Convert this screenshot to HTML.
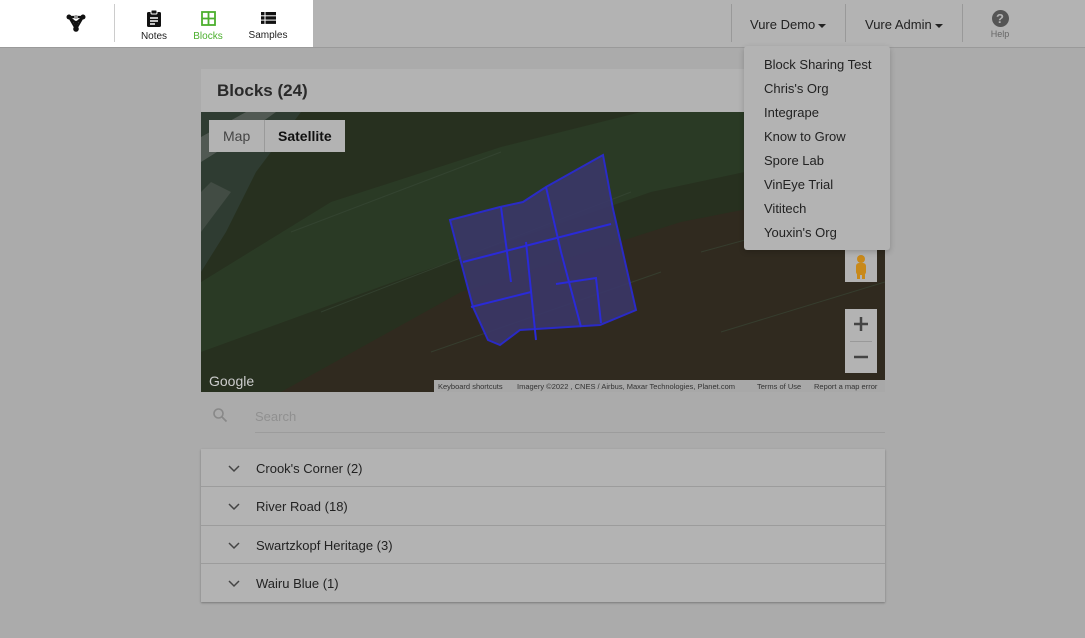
<!DOCTYPE html>
<html><head><style>
*{box-sizing:border-box;margin:0;padding:0}
body{width:1085px;height:638px;overflow:hidden;background:#ababab;font-family:"Liberation Sans",sans-serif;color:#222;position:relative}
.nav{position:absolute;left:0;top:0;width:1085px;height:48px;background:#b3b3b3;border-bottom:1px solid #9a9a9a}
.wl{position:absolute;left:0;top:0;width:313px;height:47px;background:#fff}
.sep{position:absolute;top:4px;width:1px;height:38px;background:#ccc}
.tab{position:absolute;top:0;text-align:center;font-size:10px;color:#222}
.dd{position:absolute;top:17px;font-size:13px;color:#222}
.caret{display:inline-block;border-left:4px solid transparent;border-right:4px solid transparent;border-top:4px solid #222;vertical-align:middle;margin-left:3px}
.panel{position:absolute;left:201px;top:69px;width:684px;height:43px;background:#b3b3b3;font-size:17px;padding:12px 16px;font-weight:bold;color:#2a2a2a}
.map{position:absolute;left:201px;top:112px;width:684px;height:280px;overflow:hidden;background:#252d21}
.list{position:absolute;left:201px;top:449px;width:684px;background:#b3b3b3;box-shadow:0 1px 2px rgba(0,0,0,.3)}
.row{height:38.3px;border-bottom:1px solid #9c9c9c;font-size:13px;padding-left:55px;line-height:39px;position:relative}
.row:last-child{border-bottom:none}
.row svg{position:absolute;left:27px;top:16px}
.menu{position:absolute;left:744px;top:46px;width:146px;height:204px;background:#b3b3b3;border-radius:3px;box-shadow:0 2px 6px rgba(0,0,0,.2)}
.menu div{height:24px;line-height:24px;font-size:13px;padding-left:20px}
</style></head><body>
<div class="nav">
 <div class="wl">
  <svg style="position:absolute;left:66px;top:13px" width="20" height="20" viewBox="0 0 20 20"><g fill="#111"><circle cx="3" cy="4" r="2.5"/><circle cx="17" cy="4" r="2.5"/><circle cx="10" cy="16" r="2.8"/><circle cx="10" cy="10" r="2.2"/></g><path d="M3 4L10 10L17 4M3 4L10 16L17 4M10 10V16M3 4H17" stroke="#111" stroke-width="2.2" fill="none"/><circle cx="10" cy="4" r="2" fill="#999"/></svg>
  <div class="sep" style="left:114px"></div>
  <div class="tab" style="left:138px;width:32px"><svg style="margin-top:10px" width="14" height="17" viewBox="0 0 14 17"><rect x="0" y="2" width="14" height="15" rx="1.5" fill="#111"/><rect x="4" y="0" width="6" height="4" rx="1" fill="#111" stroke="#fff" stroke-width="1"/><path d="M3 8h8M3 11h8M3 14h5" stroke="#fff" stroke-width="1.4"/></svg><div style="margin-top:1px">Notes</div></div>
  <div class="tab" style="left:190px;width:36px;color:#4caf2e"><svg style="margin-top:11px" width="15" height="15" viewBox="0 0 15 15"><rect x="1" y="1" width="13" height="13" fill="none" stroke="#4caf2e" stroke-width="1.8"/><path d="M7.5 1v13M1 7.5h13" stroke="#4caf2e" stroke-width="1.8"/></svg><div style="margin-top:2px">Blocks</div></div>
  <div class="tab" style="left:246px;width:44px"><svg style="margin-top:12px" width="15" height="12" viewBox="0 0 15 12"><g fill="#111"><rect x="0" y="0" width="3.5" height="3.3"/><rect x="4.5" y="0" width="10.5" height="3.3"/><rect x="0" y="4.3" width="3.5" height="3.3"/><rect x="4.5" y="4.3" width="10.5" height="3.3"/><rect x="0" y="8.6" width="3.5" height="3.3"/><rect x="4.5" y="8.6" width="10.5" height="3.3"/></g></svg><div style="margin-top:3px">Samples</div></div>
 </div>
 <div class="sep" style="left:731px;background:#999"></div>
 <div class="dd" style="left:750px">Vure Demo<span class="caret"></span></div>
 <div class="sep" style="left:845px;background:#999"></div>
 <div class="dd" style="left:865px">Vure Admin<span class="caret"></span></div>
 <div class="sep" style="left:962px;background:#999"></div>
 <div class="tab" style="left:984px;width:32px;color:#666"><div style="width:17px;height:17px;border-radius:50%;background:#555;color:#b3b3b3;font-weight:bold;font-size:13px;line-height:17px;margin:10px auto 0">?</div><div style="margin-top:2px;font-size:9px">Help</div></div>
</div>
<div class="panel">Blocks (24)</div>
<div class="map">
 <svg width="684" height="280" viewBox="0 0 684 280">
  <rect width="684" height="280" fill="#27301f"/>
  <path d="M0 170L130 90L300 35L440 0H684V30L450 80L220 160L0 240Z" fill="#2a3a25"/>
  <path d="M80 280L260 180L480 110L684 70V280Z" fill="#33291f" opacity=".8"/>
  <path d="M0 0H100L55 60L25 120L0 160Z" fill="#2f3c32"/>
  <path d="M0 50L40 25L75 0H45L0 25Z" fill="#5a605b" opacity=".8"/>
  <path d="M0 120L30 80L10 70L0 80Z" fill="#4a524c" opacity=".7"/>
  <g stroke="#3a4a38" stroke-width="1" opacity=".6"><path d="M90 120L300 40M120 200L430 80M500 140L684 90M230 240L460 160M520 220L684 170"/></g>
  <path d="M249 108L299 95L322 90L345 75L402 43L412 97L435 198L399 213L319 218L299 233L287 228L272 195L260 150Z" fill="#3a3768" stroke="#2a2ad8" stroke-width="2" opacity=".9"/>
  <path d="M262 150L410 112M270 195L330 180M345 75L360 140M300 95L310 170M325 130L335 228M360 140L380 215M355 172L395 166L400 211" stroke="#2a2ad8" stroke-width="2" fill="none"/>
  <rect x="8" y="8" width="136" height="32" fill="#b3b3b3"/>
  <rect x="63" y="8" width="1" height="32" fill="#9a9a9a"/>
  <text x="22" y="29" font-size="14" fill="#444" font-family="Liberation Sans">Map</text>
  <text x="77" y="29" font-size="14" font-weight="bold" fill="#111" font-family="Liberation Sans">Satellite</text>
  <rect x="644" y="138" width="32" height="32" fill="#b3b3b3"/>
  <circle cx="660" cy="147" r="4" fill="#c8891a"/><rect x="655" y="151" width="10" height="12" rx="3" fill="#c8891a"/><rect x="656" y="160" width="3" height="7" fill="#c8891a"/><rect x="661" y="160" width="3" height="7" fill="#c8891a"/>
  <rect x="644" y="197" width="32" height="64" fill="#b3b3b3"/>
  <rect x="649" y="229" width="22" height="1" fill="#999"/>
  <path d="M660 205v14M653 212h14" stroke="#444" stroke-width="2.5"/>
  <path d="M653 245h14" stroke="#444" stroke-width="2.5"/>
  <text x="8" y="274" font-size="14" fill="#ccc" font-family="Liberation Sans">Google</text>
  <rect x="233" y="268" width="451" height="12" fill="#a8a8a8"/>
  <text x="237" y="277" font-size="7.5" fill="#333" font-family="Liberation Sans">Keyboard shortcuts</text>
  <text x="316" y="277" font-size="7.5" fill="#333" font-family="Liberation Sans">Imagery ©2022 , CNES / Airbus, Maxar Technologies, Planet.com</text>
  <text x="556" y="277" font-size="7.5" fill="#333" font-family="Liberation Sans">Terms of Use</text>
  <text x="613" y="277" font-size="7.5" fill="#333" font-family="Liberation Sans">Report a map error</text>
 </svg>
</div>
<svg style="position:absolute;left:212px;top:407px" width="16" height="16" viewBox="0 0 16 16"><circle cx="6.5" cy="6.5" r="4.5" stroke="#888" stroke-width="1.6" fill="none"/><path d="M10 10l4.5 4.5" stroke="#888" stroke-width="1.8"/></svg>
<div style="position:absolute;left:255px;top:409px;font-size:13px;color:#909090">Search</div>
<div style="position:absolute;left:255px;top:432px;width:630px;height:1px;background:#9c9c9c"></div>
<div class="list">
 <div class="row"><svg width="12" height="8" viewBox="0 0 12 8"><path d="M1 1l5 5 5-5" stroke="#444" stroke-width="1.5" fill="none"/></svg>Crook's Corner (2)</div>
 <div class="row"><svg width="12" height="8" viewBox="0 0 12 8"><path d="M1 1l5 5 5-5" stroke="#444" stroke-width="1.5" fill="none"/></svg>River Road (18)</div>
 <div class="row"><svg width="12" height="8" viewBox="0 0 12 8"><path d="M1 1l5 5 5-5" stroke="#444" stroke-width="1.5" fill="none"/></svg>Swartzkopf Heritage (3)</div>
 <div class="row"><svg width="12" height="8" viewBox="0 0 12 8"><path d="M1 1l5 5 5-5" stroke="#444" stroke-width="1.5" fill="none"/></svg>Wairu Blue (1)</div>
</div>
<div class="menu" style="padding-top:7px">
 <div>Block Sharing Test</div><div>Chris's Org</div><div>Integrape</div><div>Know to Grow</div><div>Spore Lab</div><div>VinEye Trial</div><div>Vititech</div><div>Youxin's Org</div>
</div>
</body></html>
